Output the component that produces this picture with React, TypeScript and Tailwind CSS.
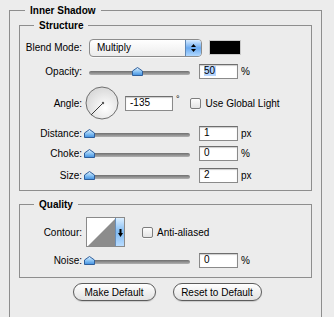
import React from "react";

function Thumb({ left }: { left: string }) {
  return (
    <svg width="11" height="9" viewBox="0 0 11 9" className={`absolute top-[2px] ${left}`}>
      <defs>
        <linearGradient id="thumbGrad" x1="0" y1="0" x2="0" y2="1">
          <stop offset="0" stopColor="#e4f3ff" />
          <stop offset="0.5" stopColor="#8cc4f4" />
          <stop offset="1" stopColor="#3f8fe0" />
        </linearGradient>
      </defs>
      <path d="M5.5 0.5 L10.5 4 L10.5 8.5 L0.5 8.5 L0.5 4 Z" fill="url(#thumbGrad)" stroke="#2f5f9c" strokeWidth="1" />
    </svg>
  );
}

function Slider({ thumb }: { thumb: string }) {
  return (
    <div className="relative w-[101px] h-[12px]">
      <div className="absolute left-0 right-0 top-[6px] h-[4px] rounded-full bg-gradient-to-b from-[#6f6f6f] to-[#b2b2b2]" />
      <Thumb left={thumb} />
    </div>
  );
}

function Field({ value, width = "w-[39px]", selected = false }: { value: string; width?: string; selected?: boolean }) {
  return (
    <div className={`${width} h-[15px] border border-[#8a8a8a] border-t-[#6e6e6e] bg-white shadow-[inset_0_1px_1px_rgba(0,0,0,0.2)] pl-[4px] flex items-center leading-none`}>
      <span className={selected ? "bg-[#b5d5ff] pr-[1px]" : ""}>{value}</span>
    </div>
  );
}

function Checkbox() {
  return (
    <div className="w-[11px] h-[11px] rounded-[2px] border border-[#7d7d7d] bg-gradient-to-b from-[#fdfdfd] to-[#e4e4e4] shadow-[0_1px_0_rgba(255,255,255,0.8)]" />
  );
}

function Label({ children }: { children: React.ReactNode }) {
  return <div className="w-[62px] text-right mr-[7px] shrink-0">{children}</div>;
}

function SliderRow({ label, thumb, value, unit, className = "" }: { label: string; thumb: string; value: string; unit: string; className?: string }) {
  return (
    <div className={`flex items-center h-[16px] ${className}`}>
      <Label>{label}</Label>
      <Slider thumb={thumb} />
      <div className="ml-[9px]">
        <Field value={value} selected={value === "50"} />
      </div>
      <span className="ml-[3px]">{unit}</span>
    </div>
  );
}

function Legend({ children }: { children: React.ReactNode }) {
  return <legend className="ml-[14px] px-[5px] font-bold leading-[13px]">{children}</legend>;
}

function Dial() {
  return (
    <svg width="34" height="34" viewBox="0 0 34 34" className="-ml-[4px]">
      <defs>
        <radialGradient id="dialGrad" cx="0.6" cy="0.65" r="0.7">
          <stop offset="0" stopColor="#ffffff" />
          <stop offset="1" stopColor="#d6d6d6" />
        </radialGradient>
      </defs>
      <circle cx="17" cy="17" r="16" fill="url(#dialGrad)" stroke="#6f6f6f" strokeWidth="1" />
      <line x1="18" y1="17" x2="6" y2="29" stroke="#3a3a3a" strokeWidth="1" />
      <circle cx="18" cy="17" r="1.2" fill="#555" />
    </svg>
  );
}

function Contour() {
  return (
    <div className="-ml-[3px] flex w-[39px] h-[30px] border border-[#8a8a8a] bg-white">
      <svg width="28" height="28" viewBox="0 0 28 28">
        <polygon points="1,28 28,1 28,28" fill="#8c8c8c" />
      </svg>
      <div className="flex-1 flex items-start justify-center pt-[11px] bg-gradient-to-b from-[#dcefff] via-[#7fbaf2] to-[#b9dcff] border-l border-[#6a8fb8]">
        <svg width="5" height="8" viewBox="0 0 5 8">
          <path d="M1.5 0 H3.5 V4 H5 L2.5 8 L0 4 H1.5 Z" fill="#000" />
        </svg>
      </div>
    </div>
  );
}

function Dropdown() {
  return (
    <div className="flex w-[113px] h-[18px] rounded-[4px] border border-[#8c8c8c] bg-gradient-to-b from-white to-[#ececec] shadow-[0_1px_0_rgba(255,255,255,0.7)] overflow-hidden">
      <div className="flex-1 flex items-center pl-[7px]">Multiply</div>
      <div className="w-[16px] flex flex-col items-center justify-center gap-[2px] bg-gradient-to-b from-[#d8ecff] via-[#6aaaf0] to-[#b0d8ff] border-l border-[#5f87b4]">
        <svg width="5" height="3" viewBox="0 0 5 3"><path d="M2.5 0 L5 3 L0 3 Z" fill="#000" /></svg>
        <svg width="5" height="3" viewBox="0 0 5 3"><path d="M0 0 L5 0 L2.5 3 Z" fill="#000" /></svg>
      </div>
    </div>
  );
}

function Button({ children, width }: { children: React.ReactNode; width: string }) {
  return (
    <div className={`${width} h-[18px] rounded-full border border-[#5c5c5c] bg-gradient-to-b from-white to-[#e2e2e2] shadow-[0_1px_1px_rgba(0,0,0,0.15)] flex items-center justify-center`}>
      {children}
    </div>
  );
}

export default function App() {
  return (
    <div className="w-[334px] h-[317px] overflow-hidden bg-[#ececec] font-['Liberation_Sans',Arial,sans-serif] text-[10px] text-black">
      <fieldset className="ml-[9px] mt-[4px] w-[313px] h-[340px] border border-b-0 border-[#8e8e8e]">
        <legend className="ml-[15px] px-[5px] font-bold leading-[13px]">Inner Shadow</legend>

        {/* Structure */}
        <fieldset className="ml-[9px] mt-[2px] w-[293px] border border-[#8e8e8e]">
          <Legend>Structure</Legend>
          <div className="flex flex-col pt-[6px] pb-[7px]">
            <div className="flex items-center h-[19px]">
              <Label>Blend Mode:</Label>
              <Dropdown />
              <div className="ml-[7px] w-[32px] h-[15px] bg-black border border-[#c9c9c9]" />
            </div>

            <SliderRow label="Opacity:" thumb="left-[43px]" value="50" unit="%" className="mt-[6px]" />

            <div className="flex items-center h-[34px] mt-[7px]">
              <Label>Angle:</Label>
              <Dial />
              <div className="ml-[6px]">
                <Field value="-135" width="w-[48px]" />
              </div>
              <span className="ml-[3px] self-start mt-[7px] text-[9px]">°</span>
              <div className="ml-[10px]">
                <Checkbox />
              </div>
              <span className="ml-[5px]">Use Global Light</span>
            </div>

            <SliderRow label="Distance:" thumb="-left-[5px]" value="1" unit="px" className="mt-[5px]" />
            <SliderRow label="Choke:" thumb="-left-[5px]" value="0" unit="%" className="mt-[4px]" />
            <SliderRow label="Size:" thumb="-left-[5px]" value="2" unit="px" className="mt-[6px]" />
          </div>
        </fieldset>

        {/* Quality */}
        <fieldset className="ml-[9px] mt-[7px] w-[293px] border border-[#8e8e8e]">
          <Legend>Quality</Legend>
          <div className="flex flex-col pt-[6px] pb-[9px]">
            <div className="flex items-center h-[30px]">
              <Label>Contour:</Label>
              <Contour />
              <div className="ml-[17px]">
                <Checkbox />
              </div>
              <span className="ml-[4px]">Anti-aliased</span>
            </div>
            <SliderRow label="Noise:" thumb="-left-[5px]" value="0" unit="%" className="mt-[5px]" />
          </div>
        </fieldset>

        <div className="flex justify-center gap-[17px] mt-[5px] pl-[3px]">
          <Button width="w-[83px]">Make Default</Button>
          <Button width="w-[89px]">Reset to Default</Button>
        </div>
      </fieldset>
    </div>
  );
}
